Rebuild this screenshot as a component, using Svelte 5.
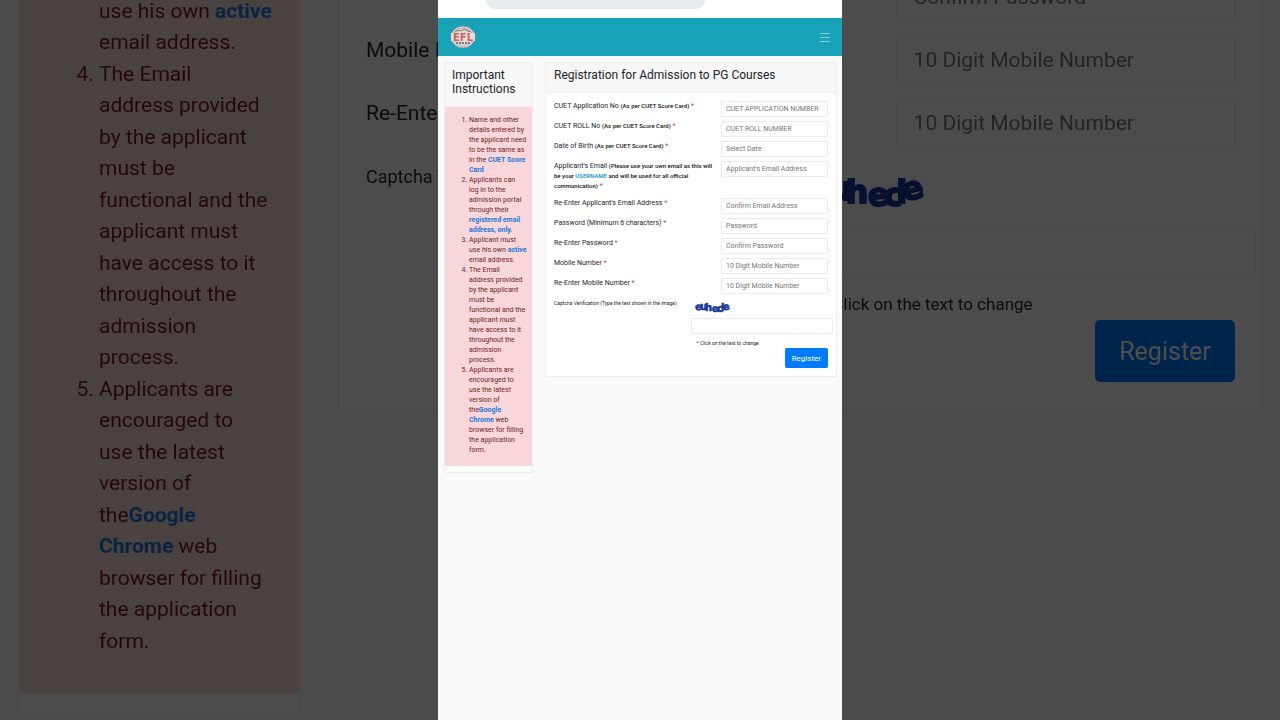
<script lang="ts">
	interface Field {
		id: string;
		label: string;
		placeholder: string;
		type?: string;
		note?: string;
	}

	const fields: Field[] = [
		{ id: 'application', label: 'CUET Application No', note: '(As per CUET Score Card)', placeholder: 'CUET APPLICATION NUMBER' },
		{ id: 'roll', label: 'CUET ROLL No', note: '(As per CUET Score Card)', placeholder: 'CUET ROLL NUMBER' },
		{ id: 'dob', label: 'Date of Birth', note: '(As per CUET Score Card)', placeholder: 'Select Date' },
		{ id: 'email', label: "Applicant's Email", placeholder: "Applicant's Email Address" },
		{ id: 'email2', label: "Re-Enter Applicant's Email Address", placeholder: 'Confirm Email Address' },
		{ id: 'password', label: 'Password (Minimum 6 characters)', placeholder: 'Password', type: 'password' },
		{ id: 'password2', label: 'Re-Enter Password', placeholder: 'Confirm Password', type: 'password' },
		{ id: 'mobile', label: 'Mobile Number', placeholder: '10 Digit Mobile Number', type: 'tel' },
		{ id: 'mobile2', label: 'Re-Enter Mobile Number', placeholder: '10 Digit Mobile Number', type: 'tel' }
	];
</script>

{#snippet lastRules()}
	<li>Applicant must use his own <b>active</b> email address.</li>
	<li>
		The Email address&nbsp;provided by the applicant must be functional&nbsp;and the applicant must
		have&nbsp;access to it throughout the admission process.
	</li>
	<li>
		Applicants are encouraged to use&nbsp;the latest version of the<b>Google Chrome</b>&nbsp;web
		browser for filling the application form.
	</li>
{/snippet}

{#snippet row(field: Field, prefix: string)}
	<div class="row">
		<label for={prefix + field.id}>
			{field.label}
			{#if field.id === 'email'}
				<strong>
					(Please use your own email as this will be your <span class="user">USERNAME</span> and will be
					used for all official communication)
				</strong>
			{:else if field.note}
				<strong>{field.note}</strong>
			{/if}
			<span class="req">*</span>
		</label>
		<input id={prefix + field.id} type={field.type ?? 'text'} placeholder={field.placeholder} />
	</div>
{/snippet}

{#snippet captcha(prefix: string)}
	<div class="captcha-row">
		<label for={prefix + 'captcha'}>
			Captcha Verification <small>(Type the text shown in the image)</small>
		</label>
		<div class="captcha">
			<button type="button" class="captcha-image" aria-label="Change captcha text">
				<svg viewBox="0 0 36 12">
					<g class="letters">
						<text x="0" y="9" transform="rotate(-8 3 6)">e</text>
						<text x="5" y="9">u</text>
						<text x="10" y="10">h</text>
						<text x="17" y="11" transform="rotate(-6 20 8)">e</text>
						<text x="22" y="11">c</text>
						<text x="26" y="10">l</text>
						<text x="28" y="9" transform="rotate(-14 31 7)">e</text>
					</g>
				</svg>
			</button>
			<input id={prefix + 'captcha'} type="text" />
			<p>* Click on the text to change</p>
		</div>
	</div>
	<div class="actions">
		<button type="submit" class="register">Register</button>
	</div>
{/snippet}

<div class="stage">
	<div class="backdrop" aria-hidden="true" inert>
		<aside class="card">
			<ol class="rules" start="3">
				{@render lastRules()}
			</ol>
		</aside>
		<form class="card form">
			{#each fields.slice(6) as field}
				{@render row(field, 'back-')}
			{/each}
			{@render captcha('back-')}
		</form>
	</div>

	<div class="screen">
		<div class="browser-bar"><div class="address"></div></div>

		<header>
			<a href="#home" class="logo" aria-label="Home">
				<svg viewBox="0 0 26 24">
					<ellipse cx="13" cy="12" rx="12" ry="11" fill="#d9dcda" stroke="#7c9aa0" />
					<ellipse cx="13" cy="12" rx="10" ry="9" fill="none" stroke="#a89e9b" stroke-dasharray="2 1" />
					<path d="M5 7l3-2 3 1 3-2 4 2 3 1" fill="none" stroke="#866f6c" />
					<rect x="1" y="8" width="24" height="8" fill="#ecd9d6" />
					<text x="13" y="16" text-anchor="middle" class="logo-text">EFL</text>
					<path d="M6 18h14" stroke="#827370" stroke-width="2" stroke-dasharray="2 1" />
				</svg>
			</a>
			<button type="button" class="menu" aria-label="Menu">
				<svg viewBox="0 0 10 10"><path d="M0 1.500h10M0 5.500h10M0 9.500h10" /></svg>
			</button>
		</header>

		<main>
			<aside class="card">
				<h2>Important Instructions</h2>
				<ol class="rules">
					<li>
						Name and other details entered by the applicant need to be the same as in the <b>CUET Score Card</b>
					</li>
					<li>
						Applicants can log&nbsp;in to the admission portal through their <b>registered email address, only.</b>
					</li>
					{@render lastRules()}
				</ol>
			</aside>

			<form class="card form">
				<h2>Registration for Admission to PG Courses</h2>
				<div class="form-body">
					{#each fields as field}
						{@render row(field, '')}
					{/each}
					{@render captcha('')}
				</div>
			</form>
		</main>
	</div>
</div>

<style>
	:global(body) {
		background: #4b4b4b;
	}

	.stage,
	.stage * {
		box-sizing: border-box;
	}

	.stage {
		position: relative;
		display: grid;
		grid-template-columns: 438fr 404fr 438fr;
		min-height: 100vh;
		overflow: hidden;
		background: #4b4b4b;
		font-family: Roboto, 'Liberation Sans', sans-serif;
		color: #212529;
	}

	h2,
	p,
	ol {
		margin: 0;
	}

	h2 {
		font-size: 12px;
		line-height: 14px;
		font-weight: 400;
	}

	button,
	input {
		font-family: inherit;
	}

	.card {
		min-width: 0;
		background: #fff;
		border: 1px solid #ededed;
		border-radius: 2px;
	}

	.rules {
		background: #f8d7da;
		color: #721c24;
	}

	.rules b {
		color: #1a78dc;
	}

	.row,
	.captcha-row {
		display: grid;
		align-items: start;
	}

	.row {
		grid-template-columns: 167fr 107fr;
	}

	.captcha-row {
		grid-template-columns: 137fr 143fr;
	}

	input {
		display: block;
		width: 100%;
		min-width: 0;
		background: #fff;
		border: 1px solid #e9ebed;
		border-radius: 1px;
		outline: none;
	}

	input::placeholder {
		color: #757575;
		opacity: 1;
	}

	.req {
		color: #dc3545;
	}

	.user {
		color: #1488cc;
	}

	.captcha-image {
		display: block;
		padding: 0;
		border: 0;
		background: none;
	}

	.captcha-image svg {
		display: block;
		width: 100%;
		overflow: visible;
	}

	.letters {
		font-family: 'DejaVu Sans', sans-serif;
		font-size: 10px;
		font-weight: 700;
		fill: #173a9c;
		stroke: #173a9c;
		stroke-width: 0.6;
	}

	.actions {
		display: flex;
		justify-content: flex-end;
	}

	.register {
		border: 0;
		background: #007bff;
		color: #fff;
	}

	/* Phone screen */

	.screen {
		position: relative;
		grid-column: 2;
		background: #fafafa;
	}

	.browser-bar {
		height: 18px;
		background: #fff;
	}

	.address {
		width: 54%;
		height: 9px;
		margin-left: 12%;
		border-radius: 0 0 16px 16px;
		background: #e8eced;
	}

	header {
		display: flex;
		align-items: center;
		justify-content: space-between;
		height: 38px;
		padding: 0 12px;
		background: #17a2b8;
	}

	.logo svg {
		display: block;
		width: 26px;
		height: 24px;
	}

	.logo-text {
		font-family: 'DejaVu Sans', sans-serif;
		font-size: 10px;
		font-weight: 700;
		fill: #c4685f;
	}

	.menu {
		padding: 0;
		border: 0;
		background: none;
	}

	.menu svg {
		display: block;
		width: 10px;
		height: 10px;
	}

	.menu path {
		stroke: #85cdd8;
	}

	main {
		display: grid;
		grid-template-columns: 89fr 292fr;
		align-items: start;
		gap: 12px;
		padding: 6px 5px 0 6px;
	}

	.screen h2 {
		padding: 5px 7px 10px;
		background: #f7f7f7;
		border-bottom: 1px solid #f0f0f0;
	}

	.screen .form h2 {
		padding-left: 8px;
	}

	.screen .rules {
		padding: 8px 4px 11px 24px;
		margin-bottom: 6px;
		border-radius: 1px;
		font-size: 7px;
		line-height: 10px;
	}

	.form-body {
		padding: 8px;
	}

	.screen .row {
		margin-bottom: 4px;
	}

	.screen label {
		padding: 0 6px 3px 0;
		font-size: 7px;
		line-height: 10px;
	}

	.screen strong {
		font-size: 6px;
		font-weight: 500;
		color: #111;
	}

	.screen .row input,
	.screen .captcha input {
		height: 16px;
		padding: 0 4px;
		font-size: 7px;
	}

	.screen .captcha-row {
		margin-right: -5px;
	}

	.screen .captcha-row label {
		padding-right: 0;
		font-size: 5px;
		white-space: nowrap;
	}

	.screen .captcha-row small {
		font-size: 5px;
	}

	.screen .captcha-image {
		width: 36px;
		margin: 3px 0 5px 4px;
	}

	.screen .captcha p {
		padding: 4px 6px 0;
		font-size: 5px;
		line-height: 10px;
	}

	.screen .register {
		height: 20px;
		padding: 0 7px;
		border-radius: 2px;
		font-size: 8px;
	}

	/* Enlarged, darkened page behind the phone screen */

	.backdrop {
		position: absolute;
		inset: -55px 18px auto;
		display: grid;
		grid-template-columns: 282fr 923fr;
		align-items: start;
		gap: 39px;
		filter: brightness(0.3);
	}

	.backdrop::before {
		content: '';
		position: absolute;
		inset: 0 -18px -60px;
		z-index: -1;
		background: #fafafa;
	}

	.backdrop .card {
		border-radius: 4px;
		border-top: 0;
	}

	.backdrop .rules {
		padding: 19px 26px 36px 80px;
		margin-bottom: 22px;
		border-radius: 4px;
		font-size: 21px;
		line-height: 1.5;
	}

	.backdrop .form {
		padding: 27px 26px;
	}

	.backdrop .row {
		grid-template-columns: 530fr 338fr;
		margin-bottom: 13px;
	}

	.backdrop input {
		height: 50px;
		padding: 0 16px;
		border-radius: 4px;
		font-size: 21px;
	}

	.backdrop label {
		font-size: 21px;
		line-height: 31px;
	}

	.backdrop .captcha-row {
		margin-right: -20px;
	}

	.backdrop .captcha-row label {
		font-size: 18px;
	}

	.backdrop small {
		font-size: 16px;
	}

	.backdrop .captcha-image {
		width: 114px;
		margin: 10px 0 17px 13px;
	}

	.backdrop .captcha p {
		padding: 13px 20px 0;
		font-size: 17px;
		line-height: 31px;
	}

	.backdrop .register {
		width: 140px;
		height: 62px;
		border-radius: 5px;
		font-size: 25px;
	}
</style>
